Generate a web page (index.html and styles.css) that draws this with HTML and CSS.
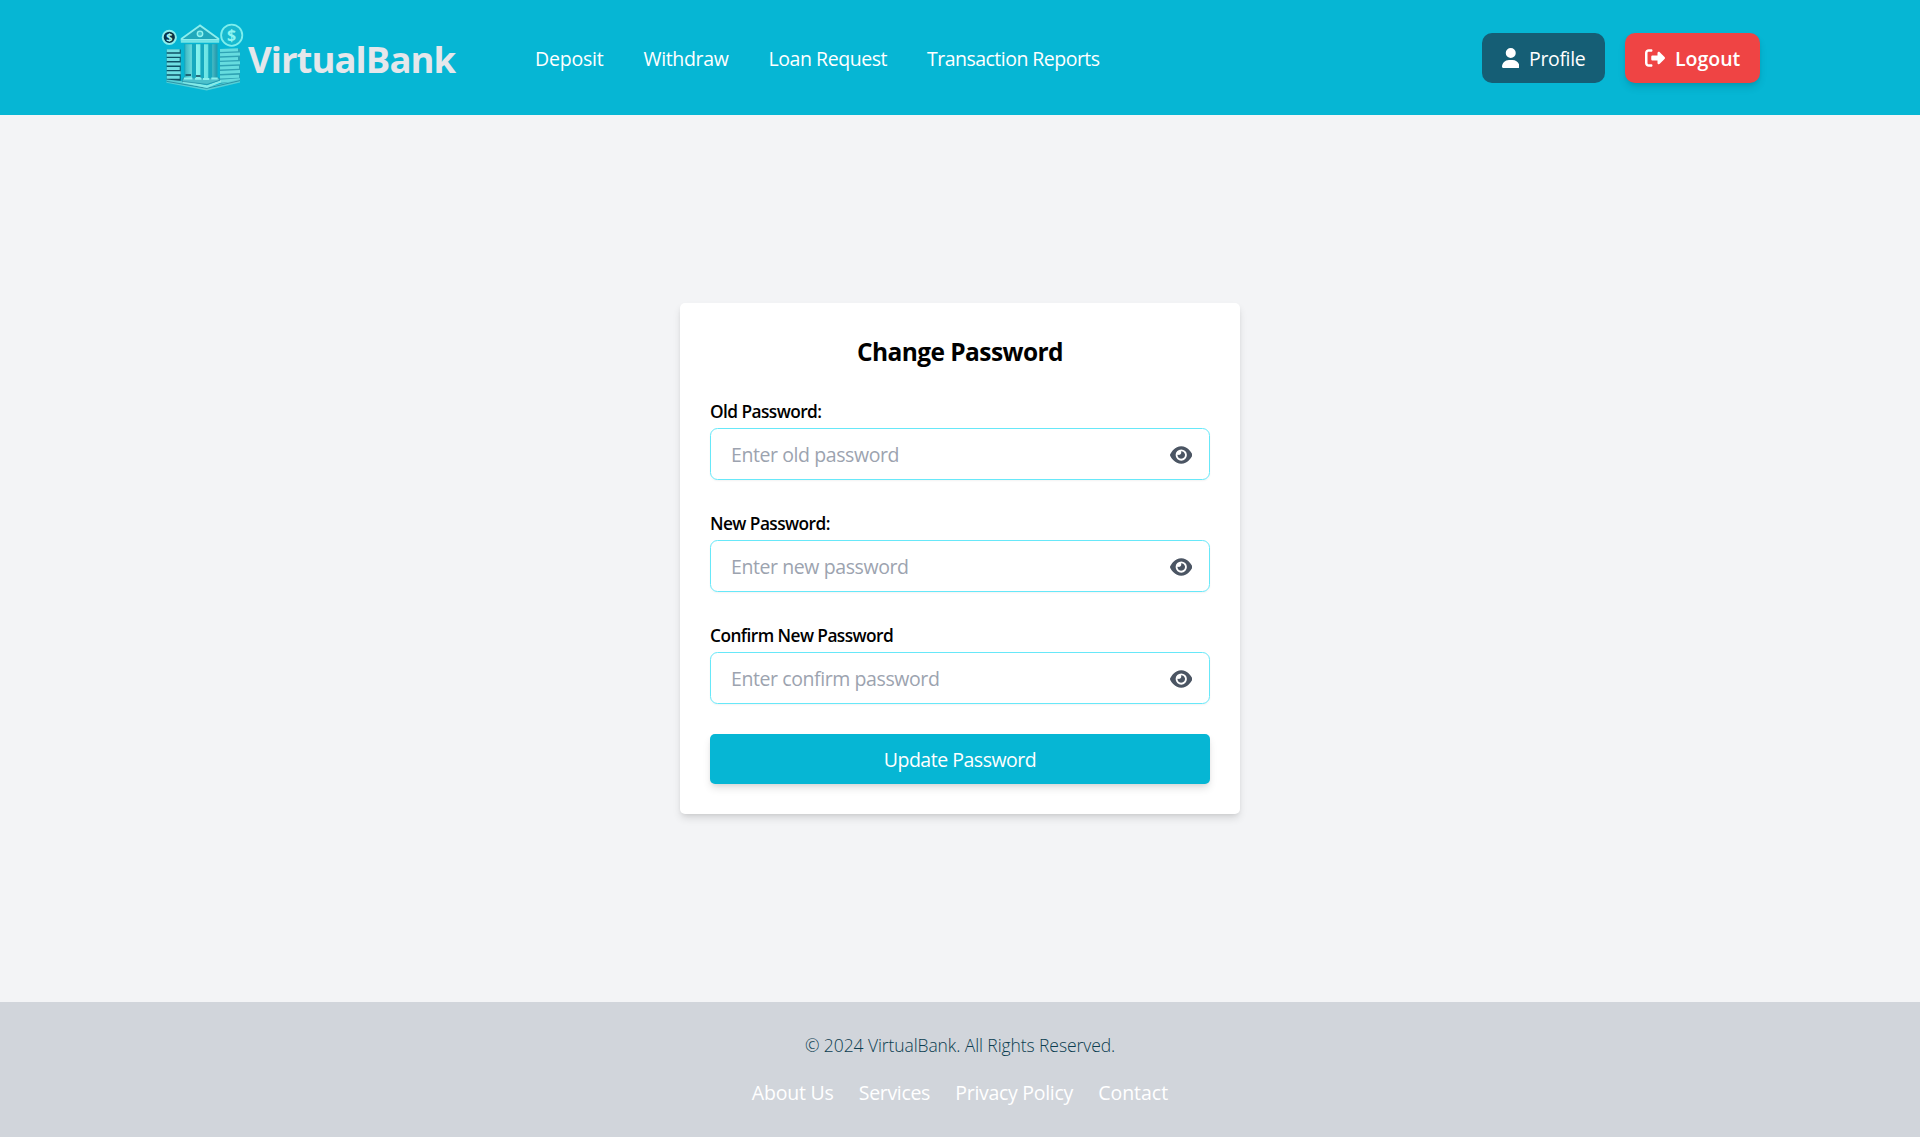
FILE: index.html
```html
<!DOCTYPE html>
<html lang="en">
<head>
<meta charset="utf-8">
<title>VirtualBank - Change Password</title>
<link rel="stylesheet" href="styles.css">
</head>
<body>
<svg class="sprite" aria-hidden="true">
  <symbol id="eye" viewBox="0 0 576 512"><path d="M288 32c-80.8 0-145.5 36.8-192.6 80.6C48.6 156 17.3 208 2.5 243.7c-3.3 7.9-3.3 16.7 0 24.6C17.3 304 48.6 356 95.4 399.4C142.5 443.2 207.2 480 288 480s145.5-36.8 192.6-80.6c46.8-43.5 78.1-95.4 93-131.1c3.3-7.9 3.3-16.7 0-24.6c-14.9-35.7-46.2-87.7-93-131.1C433.5 68.8 368.8 32 288 32zM144 256a144 144 0 1 1 288 0 144 144 0 1 1 -288 0zm144-64c0 35.3-28.7 64-64 64c-7.1 0-13.9-1.2-20.3-3.3c-5.5-1.8-11.9 1.6-11.7 7.4c.3 6.9 1.3 13.8 3.2 20.7c13.7 51.2 66.4 81.6 117.6 67.9s81.6-66.4 67.9-117.6c-11.1-41.5-47.8-69.4-88.6-71.1c-5.8-.2-9.2 6.1-7.4 11.7c2.1 6.4 3.3 13.2 3.3 20.3z"/></symbol>
</svg>

<header class="header">
  <div class="container">
    <a class="brand">
      <svg class="logo" viewBox="0 0 86 75">
        <defs>
          <linearGradient id="metal" x1="0" y1="0" x2="1" y2="0">
            <stop offset="0" stop-color="#3fb8c4"/>
            <stop offset=".35" stop-color="#86f3ee"/>
            <stop offset=".7" stop-color="#6be4e4"/>
            <stop offset="1" stop-color="#2798ab"/>
          </linearGradient>
        </defs>
        <!-- coins -->
        <circle cx="9.3" cy="17.3" r="6.6" fill="#0c3347" stroke="#8ceeed" stroke-width="2"/>
        <text class="coin" x="9.3" y="21.2" font-size="11" fill="#a8f6f3">$</text>
        <circle cx="71.7" cy="15.2" r="10.6" fill="#18b9cf" stroke="#7deeed" stroke-width="1.8"/>
        <text class="coin" x="71.7" y="21" font-size="16" fill="#8ef5f1">$</text>
        <!-- coin stacks -->
        <path d="M6.7 29.5h14v32l-14-1z" fill="#0e5266"/>
        <path d="M6.7 30.8h13M6.7 35.2h14M6.7 39.6h13M6.7 44h14M6.7 48.4h13M6.7 52.8h14M6.7 57.2h13" stroke="#6fdfe2" stroke-width="3"/>
        <path d="M60 29h20v32l-20 3z" fill="#2fa3b4"/>
        <path d="M60 30.5l18-.8M60 34.8l20-.8M60 39.2l18-.8M60 43.6l20-.8M60 48l19-.8M60 52.4l20-.8M60 57l19-.8M60 61.2l20-1.4" stroke="#66dcdf" stroke-width="3"/>
        <!-- plinth -->
        <path d="M6.5 59.5L22 61l24.7 6.5L80 59v3.4L46.7 70.5 6.5 62.8z" fill="#55cfd7"/>
        <path d="M6.5 61.3l40.2 7L80 60.6" fill="none" stroke="#1f8498" stroke-width=".8"/>
        <path d="M23 60.5l24 4.7 14-5.2v2.6L47 68 23 63z" fill="#85ebe9"/>
        <path d="M23 58h36l1 2.2-13 4.2-25-3z" fill="#4cc1cc" stroke="#238da0" stroke-width=".7"/>
        <!-- pillars -->
        <path d="M24 24h34v34H24z" fill="#16a9bf"/>
        <path d="M25.3 24.3h6.6v34h-6.6zM36 24.3h4.4v34.2H36zM44 24.3h4.3v34.4H44zM52.2 24.3h4.5v34h-4.5z" fill="url(#metal)"/>
        <path d="M25.5 55h5.5M36 56h4.5" stroke="#0f4358" stroke-width="1.6"/>
        <path d="M24 58.6h8.4M35 58.8h6.4M43 59h6.2M51.3 58.6h6.4" stroke="#8bf0ed" stroke-width="2"/>
        <!-- pediment -->
        <path d="M40 5.4L21.6 18.8v1h36.8v-1z" fill="#20a9bc" stroke="#8deeed" stroke-width="1.8"/>
        <path d="M20.8 21.7h38.4" stroke="#76e5e6" stroke-width="2.2"/>
        <circle cx="40" cy="13.8" r="2.7" fill="#3dc4cf" stroke="#93f3ef" stroke-width="1.4"/>
      </svg>
      <span class="brand-name">VirtualBank</span>
    </a>
    <nav class="nav">
      <a class="deposit">Deposit</a>
      <a class="withdraw">Withdraw</a>
      <a class="loan">Loan Request</a>
      <a class="reports">Transaction Reports</a>
    </nav>
    <div class="actions">
      <a class="btn btn-profile">
        <svg width="17.5" height="20" viewBox="0 0 448 512"><path d="M224 256A128 128 0 1 0 224 0a128 128 0 1 0 0 256zm-45.7 48C79.8 304 0 383.8 0 482.3C0 498.7 13.3 512 29.7 512H418.3c16.4 0 29.7-13.3 29.7-29.7C448 383.8 368.2 304 269.7 304H178.3z"/></svg>
        <span>Profile</span>
      </a>
      <a class="btn btn-logout">
        <svg width="20" height="20" viewBox="0 0 512 512"><path d="M377.9 105.9L500.7 228.7c7.2 7.2 11.3 17.1 11.3 27.3s-4.1 20.1-11.3 27.3L377.9 406.1c-6.4 6.4-15 9.9-24 9.9c-18.7 0-33.9-15.2-33.9-33.9l0-62.1-128 0c-17.7 0-32-14.3-32-32l0-64c0-17.7 14.3-32 32-32l128 0 0-62.1c0-18.7 15.2-33.9 33.9-33.9c9 0 17.6 3.6 24 9.9zM160 96L96 96c-17.7 0-32 14.3-32 32l0 256c0 17.7 14.3 32 32 32l64 0c17.7 0 32 14.3 32 32s-14.3 32-32 32l-64 0c-53 0-96-43-96-96L0 128C0 75 43 32 96 32l64 0c17.7 0 32 14.3 32 32s-14.3 32-32 32z"/></svg>
        <span>Logout</span>
      </a>
    </div>
  </div>
</header>

<main class="main">
  <form class="card">
    <h2>Change Password</h2>
    <div class="field">
      <label for="old">Old Password:</label>
      <div class="input"><input id="old" type="password" placeholder="Enter old password"><svg class="eye"><use href="#eye"/></svg></div>
    </div>
    <div class="field">
      <label for="new">New Password:</label>
      <div class="input"><input id="new" type="password" placeholder="Enter new password"><svg class="eye"><use href="#eye"/></svg></div>
    </div>
    <div class="field">
      <label for="confirm">Confirm New Password</label>
      <div class="input"><input id="confirm" type="password" placeholder="Enter confirm password"><svg class="eye"><use href="#eye"/></svg></div>
    </div>
    <button class="submit" type="button">Update Password</button>
  </form>
</main>

<footer class="footer">
  <p>© 2024 VirtualBank. All Rights Reserved.</p>
  <div class="links">
    <a class="about">About Us</a>
    <a class="services">Services</a>
    <a class="privacy">Privacy Policy</a>
    <a class="contact">Contact</a>
  </div>
</footer>
</body>
</html>
```
FILE: styles.css
```css
* { box-sizing: border-box; }

body {
  margin: 0;
  min-height: 100vh;
  display: flex;
  flex-direction: column;
  background: #f3f4f6;
  font-family: "Segoe UI", "Open Sans", "Noto Sans", sans-serif;
  font-size: 19.5px;
  line-height: 30px;
  color: #000;
}

.sprite { display: none; }

.header {
  height: 115px;
  background: #06b6d4;
  color: #fff;
}

.container {
  width: 1600px;
  height: 100%;
  margin: 0 auto;
  display: flex;
  align-items: center;
}

.brand { display: flex; align-items: center; width: 375px; }
.logo { width: 86px; height: 75px; flex: none; margin-left: -.5px; }
.coin { font-family: "Open Sans", sans-serif; font-weight: 700; text-anchor: middle; }

.brand-name {
  margin-left: 2.5px;
  padding-top: 2px;
  font-size: 36.5px;
  font-weight: 700;
  line-height: 44px;
  letter-spacing: -.95px;
  color: #e5e7eb;
}

.nav { display: flex; gap: 40px; padding-top: 2px; }
.deposit { letter-spacing: -.2px; }
.withdraw { letter-spacing: -.35px; }
.loan { letter-spacing: -.43px; }
.reports { letter-spacing: -.53px; }

.actions { display: flex; gap: 20px; margin-left: auto; }

.btn {
  display: flex;
  align-items: center;
  gap: 10px;
  height: 50px;
  padding: 0 19px 0 19.5px;
  border-radius: 10px;
}
.btn svg { fill: #fff; flex: none; }
.btn span { padding-top: 2px; }
.btn-profile { width: 123px; background: #155e75; letter-spacing: -.35px; }
.btn-logout {
  width: 135px;
  background: #ef4444;
  font-weight: 600;
  letter-spacing: 0;
  box-shadow: 0 5px 8px -1px rgba(0, 0, 0, .12), 0 2px 5px -2px rgba(0, 0, 0, .1);
}
.btn-logout span { margin-left: .5px; }

.main { flex: 1; display: flex; align-items: center; justify-content: center; }

.card {
  width: 560px;
  padding: 31px 30px 30px;
  background: #fff;
  border-radius: 5px;
  box-shadow: 0 5px 8px -1px rgba(0, 0, 0, .12), 0 2px 5px -2px rgba(0, 0, 0, .1);
}

.card h2 {
  margin: 0 0 30px;
  font-size: 24.5px;
  font-weight: 700;
  line-height: 35px;
  letter-spacing: -.58px;
  text-align: center;
}

.field { margin-bottom: 31px; }
.field label {
  display: block;
  margin-bottom: 4px;
  font-size: 17.3px;
  font-weight: 600;
  line-height: 25px;
  letter-spacing: -.56px;
}
.field:last-of-type { margin-bottom: 30px; }

.input {
  display: flex;
  align-items: center;
  height: 52px;
  padding: 0 17px 0 20px;
  border: 1px solid #67e8f9;
  border-radius: 7.5px;
  box-shadow: 0 1px 2px rgba(0, 0, 0, .05);
}
.input input {
  flex: 1;
  min-width: 0;
  padding: 1px 0 0;
  border: 0;
  outline: 0;
  background: transparent;
  font: inherit;
  letter-spacing: -.41px;
}
.input input::placeholder { color: #9ca3af; opacity: 1; }
.eye { width: 22.5px; height: 20px; flex: none; fill: #4b5563; margin-top: 2px; }

.submit {
  display: block;
  width: 100%;
  height: 50px;
  padding: 2px 0 0;
  border: 0;
  border-radius: 5px;
  background: #06b6d4;
  color: #fff;
  font: inherit;
  letter-spacing: -.48px;
  box-shadow: 0 5px 8px -1px rgba(0, 0, 0, .12), 0 2px 5px -2px rgba(0, 0, 0, .1);
}

.footer {
  height: 135px;
  padding: 31px 0 29px;
  background: #d1d5db;
  text-align: center;
}
.footer p {
  margin: 0 0 20px;
  font-size: 17.5px;
  font-weight: 300;
  line-height: 25px;
  letter-spacing: -.09px;
  color: #0b3d50;
}
.links { display: flex; justify-content: center; gap: 25.3px; color: #fff; }
.about { letter-spacing: -.23px; }
.services { letter-spacing: -.33px; }
.privacy { letter-spacing: -.3px; }
.contact { letter-spacing: -.02px; }
```
